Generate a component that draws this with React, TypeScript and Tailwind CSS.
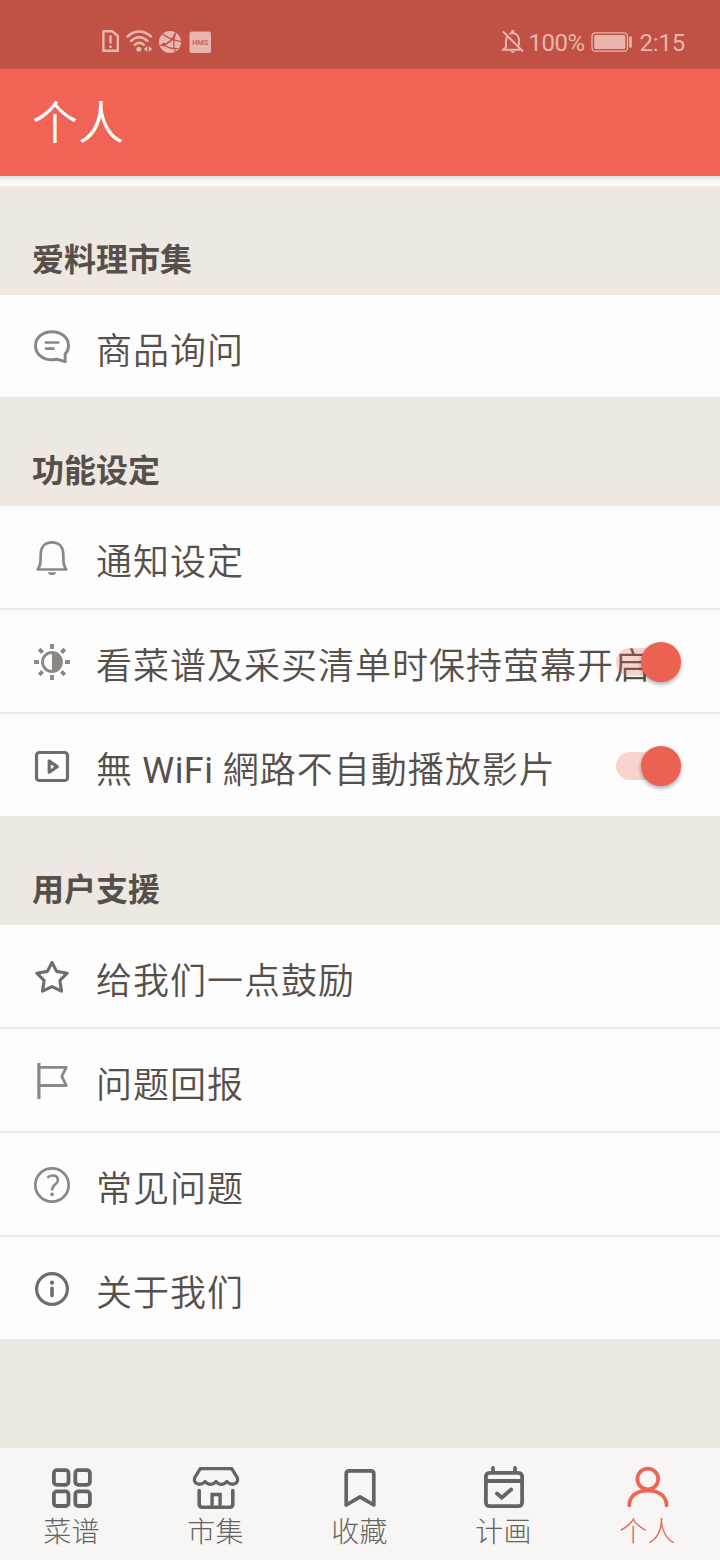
import type { ReactNode } from 'react';

function RowIcon({ children, dark = false }: { children: ReactNode; dark?: boolean }) {
  return (
    <svg
      viewBox="0 0 40 40"
      fill="none"
      stroke="currentColor"
      strokeLinecap="round"
      strokeLinejoin="round"
      className={dark ? 'size-10 shrink-0 text-[#706c69]' : 'size-10 shrink-0 text-[#8c8782]'}
    >
      {children}
    </svg>
  );
}

const ChatIcon = () => (
  <RowIcon>
    <path strokeWidth="3" d="M33.2 34.600L25 32.300C23.500 32.600 21.800 32.800 20 32.800C10.600 32.800 3.500 26.800 3.500 18.700S10.600 4.700 20 4.700S36.500 10.600 36.500 18.700C36.500 21.900 35.300 24.700 33.200 26.900Z" />
    <path strokeWidth="2.700" d="M14 15.500H26.300M14 21.600H21.500" />
  </RowIcon>
);

const BellIcon = () => (
  <RowIcon>
    <path strokeWidth="2.700" d="M8.700 17C8.700 8.700 13 4.400 20 4.400S31.300 8.700 31.300 17C31.300 25.500 31.800 28 34.300 31.500H5.700C8.200 28 8.700 25.500 8.700 17Z" />
    <path fill="currentColor" stroke="none" d="M15.600 34.200H24.400C23.500 36.200 22 37.100 20 37.100S16.500 36.200 15.600 34.200Z" />
  </RowIcon>
);

const BrightnessIcon = () => (
  <RowIcon>
    <circle cx="20" cy="20" r="9.500" strokeWidth="2.800" />
    <path fill="currentColor" stroke="none" d="M20 11A9 9 0 0 1 20 29Z" />
    <path
      strokeWidth="3.800"
      strokeLinecap="butt"
      d="M20 2V7M20 33V38M2 20H7M33 20H38M7.200 7.200L10.600 10.600M29.400 29.400L32.800 32.800M7.200 32.800L10.600 29.400M29.400 10.600L32.800 7.200"
    />
  </RowIcon>
);

const PlayIcon = () => (
  <RowIcon dark>
    <rect x="4.500" y="6.500" width="31" height="28" rx="2.800" strokeWidth="3.200" />
    <path strokeWidth="3.200" d="M17.200 15V26.200L25.200 20.600Z" />
  </RowIcon>
);

const StarIcon = () => (
  <RowIcon dark>
    <path strokeWidth="3.100" d="M20 5.500L24.600 14.400L35.200 16.200L27.900 23.400L29.500 34.200L20 29.600L10.500 34.200L12.100 23.400L4.800 16.200L15.400 14.400Z" />
  </RowIcon>
);

const FlagIcon = () => (
  <RowIcon>
    <path strokeWidth="3.200" strokeLinecap="butt" d="M6.900 2V38" />
    <path strokeWidth="2.800" d="M7 6.300H34.200L29.800 15.400L34.200 24.500H7" />
  </RowIcon>
);

const HelpIcon = () => (
  <RowIcon>
    <circle cx="20" cy="20" r="16.700" strokeWidth="2.700" />
    <path strokeWidth="2.500" d="M16.200 12.200C17.400 11 18.900 10.600 20.700 10.600C23.900 10.600 25.900 12.400 25.900 15.200C25.900 19.300 20.200 19.300 20.200 24.500" />
    <circle cx="20.100" cy="29.400" r="1.800" fill="currentColor" stroke="none" />
  </RowIcon>
);

const InfoIcon = () => (
  <RowIcon dark>
    <circle cx="20" cy="20" r="15.400" strokeWidth="3.200" />
    <circle cx="20" cy="13.700" r="2.100" fill="currentColor" stroke="none" />
    <path strokeWidth="3.600" d="M20 19.300V26.600" />
  </RowIcon>
);

function Switch() {
  return (
    <div className="absolute right-[39px] top-8 flex h-10 w-[65px] items-center justify-end rounded-full">
      <div className="absolute left-0 top-1.5 h-7 w-[54px] rounded-full bg-[#ef6353]/27" />
      <div className="relative size-10 rounded-full bg-[#eb6152] shadow-[0_2px_4px_rgba(0,0,0,0.35)]" />
    </div>
  );
}

function Row({ icon, label, toggle = false, last = false }: { icon: ReactNode; label: ReactNode; toggle?: boolean; last?: boolean }) {
  return (
    <li
      className={
        last
          ? 'relative flex h-[104px] items-center border-b-2 border-[#ebe9e6] bg-[#fdfdfd] pl-8 pt-0.5'
          : 'relative flex h-[104px] items-center border-b-2 border-[#e9e9e9] bg-[#fdfdfd] pl-8 pt-0.5'
      }
    >
      {icon}
      <span className="ml-6 mt-2.5 whitespace-nowrap text-[36px] font-[350] leading-10 tracking-[1px] text-[#574f4a]">{label}</span>
      {toggle && <Switch />}
    </li>
  );
}

function Section({ title, first = false, children }: { title: string; first?: boolean; children: ReactNode }) {
  return (
    <section>
      <h2
        className={
          first
            ? 'flex h-[109px] items-end pb-[15px] pl-8 text-[32px] font-bold leading-10 text-[#574f4a]'
            : 'flex h-[107px] items-end pb-[15px] pl-8 text-[32px] font-bold leading-10 text-[#574f4a]'
        }
      >
        {title}
      </h2>
      <ul>{children}</ul>
    </section>
  );
}

function Tab({ label, active = false, children }: { label: string; active?: boolean; children: ReactNode }) {
  return (
    <a className={active ? 'flex flex-1 flex-col items-center pt-4 text-[#ea6657]' : 'flex flex-1 flex-col items-center pt-4 text-[#646464]'}>
      <svg viewBox="0 0 48 48" fill="none" stroke="currentColor" strokeWidth="3.800" strokeLinecap="round" strokeLinejoin="round" className="size-12">
        {children}
      </svg>
      <span className="mt-[3px] pr-px text-[28px] font-light leading-9 tracking-[0.300px]">{label}</span>
    </a>
  );
}

function StatusBar() {
  return (
    <div className="flex h-[69px] items-start bg-[#c15144] text-[#e9b5ae]">
      <svg viewBox="0 0 112 28" className="ml-[101px] mt-7 h-7 w-28" fill="none" stroke="currentColor">
        <path strokeWidth="2.400" strokeLinejoin="round" d="M2.400 3.200H11.200L16.800 8V22.800H2.400Z" />
        <path strokeWidth="2.400" d="M9.500 7.500V15.500M9.500 17.500V20" />
        <g strokeWidth="2.500" strokeLinecap="round">
          <path d="M26.500 8.500C33.500 1.800 42.500 1.800 50 8.500M30 13C35.300 8.300 41.300 8.300 46.500 13M33.800 16.700C36.800 14.300 39.800 14.300 42.800 16.700" />
        </g>
        <circle cx="37.800" cy="21.200" r="2.500" fill="currentColor" stroke="none" />
        <path fill="currentColor" stroke="none" d="M42.800 21L46.200 18V24ZM47.800 18L51.200 21L47.800 24Z" />
        <circle cx="69" cy="14" r="11" fill="currentColor" stroke="none" />
        <g stroke="#c15144" strokeWidth="1.200">
          <path d="M61.500 6C66 9.500 70 12 80 13.500M58.500 17.500C66 17 72 12 74.500 4.500M74.500 5.500C72.500 11 72 18 74.500 24M63 16.500C66 19.500 70 21 77 20.500" />
        </g>
        <circle cx="62.800" cy="16.700" r="1.900" fill="#c15144" stroke="none" />
        <circle cx="72.500" cy="11.500" r="1.300" fill="#c15144" stroke="none" />
        <rect x="88.500" y="3.500" width="21.500" height="21.500" rx="2.500" fill="currentColor" stroke="none" />
        <text x="99.200" y="16.800" textAnchor="middle" fontSize="7.200" fontWeight="700" textLength="16" lengthAdjust="spacingAndGlyphs" fill="#c1685f" stroke="none">HMS</text>
      </svg>
      <div className="ml-auto flex items-start pr-[35px] pt-7">
        <svg viewBox="0 0 24 28" className="h-7 w-6" fill="none" stroke="currentColor" strokeWidth="2">
          <path d="M6.200 8.500C5.300 10 5 11.500 5 13.500V19L2.500 21.700H19M8.500 6C12.500 3.300 18 6.500 18 12.500V17.500M2 3.500L22 23.500" />
          <path d="M11.800 2V5" strokeWidth="2.800" />
          <path fill="currentColor" stroke="none" d="M9 23.300H14.500Q11.800 26.500 9 23.300Z" />
        </svg>
        <span className="ml-[3px] text-2xl leading-[30px] tracking-[-0.500px]">100%</span>
        <svg viewBox="0 0 42 22" className="ml-1.5 mt-[3px] h-[22px] w-[42px]" fill="none" stroke="currentColor">
          <rect x="1" y="1.800" width="35.500" height="18.400" rx="3.500" strokeWidth="1.300" />
          <rect x="3.200" y="3.900" width="31.200" height="14.200" rx="1.500" fill="currentColor" stroke="none" />
          <path strokeWidth="2.600" strokeLinecap="round" d="M39.500 6.500V15.500" />
        </svg>
        <span className="ml-[7px] text-2xl leading-[30px] tracking-[-0.200px]">2:15</span>
      </div>
    </div>
  );
}

export default function App() {
  return (
    <div className="flex h-[1560px] w-[720px] flex-col overflow-hidden bg-[#ede8e1] font-['Roboto','Noto_Sans_CJK_SC',sans-serif]" lang="zh-CN">
      <StatusBar />
      <header className="flex h-[107px] items-center bg-[#f16354] pl-8 text-white">
        <h1 className="text-[46px] font-[350] leading-none">个人</h1>
      </header>
      <div className="h-2.5 bg-linear-to-b from-[#dedede] via-[#f7f7f7] via-50% to-[#fcfcfc]" />
      <main className="flex-1">
        <Section title="爱料理市集" first>
          <Row icon={<ChatIcon />} label="商品询问" last />
        </Section>
        <Section title="功能设定">
          <Row icon={<BellIcon />} label="通知设定" />
          <Row icon={<BrightnessIcon />} label="看菜谱及采买清单时保持萤幕开启" toggle />
          <Row
            icon={<PlayIcon />}
            label={
              <>
                無<span className="font-normal tracking-[0.400px]"> WiFi </span>網路不自動播放影片
              </>
            }
            toggle
            last
          />
        </Section>
        <Section title="用户支援">
          <Row icon={<StarIcon />} label="给我们一点鼓励" />
          <Row icon={<FlagIcon />} label="问题回报" />
          <Row icon={<HelpIcon />} label="常见问题" />
          <Row icon={<InfoIcon />} label="关于我们" last />
        </Section>
      </main>
      <nav className="flex h-28 bg-[#f7f6f4]">
        <Tab label="菜谱">
          <rect x="5.900" y="6.200" width="14.600" height="14.600" rx="3" />
          <rect x="27.300" y="6.200" width="14.600" height="14.600" rx="3" />
          <rect x="5.900" y="27.400" width="14.600" height="14.600" rx="3" />
          <rect x="27.300" y="27.400" width="14.600" height="14.600" rx="3" />
        </Tab>
        <Tab label="市集">
          <path strokeWidth="3.300" d="M8.300 4.700H39.700L45.200 13.500C47.500 20 39.500 22.500 34.900 17.500C32 21.200 27 21.200 24 17.500C21 21.200 16 21.200 13.100 17.500C8.500 22.500 0.500 20 2.800 13.500Z" />
          <path strokeWidth="3.600" d="M7.200 26.500V40Q7.200 43.200 10.400 43.200H37.600Q40.800 43.200 40.800 40V26.500" />
          <path strokeWidth="3.400" strokeLinejoin="miter" d="M20.100 43V30.500H28.100V43" />
        </Tab>
        <Tab label="收藏">
          <path strokeWidth="3.700" d="M10.200 41V10Q10.200 6.900 13.300 6.900H34.700Q37.800 6.900 37.800 10V41L24 32.900Z" />
        </Tab>
        <Tab label="计画">
          <rect x="5.900" y="8.900" width="36.200" height="33.200" rx="3.500" />
          <path d="M6 17H42M13 4V8M35 4V8M17 29.500L21.700 33.700L31.200 25.500" />
        </Tab>
        <Tab label="个人" active>
          <circle cx="23.800" cy="15" r="10.400" />
          <path d="M5.300 41.300C5.300 32 12.500 26.600 23.800 26.600S42.500 32 42.500 41.300" />
        </Tab>
      </nav>
    </div>
  );
}
